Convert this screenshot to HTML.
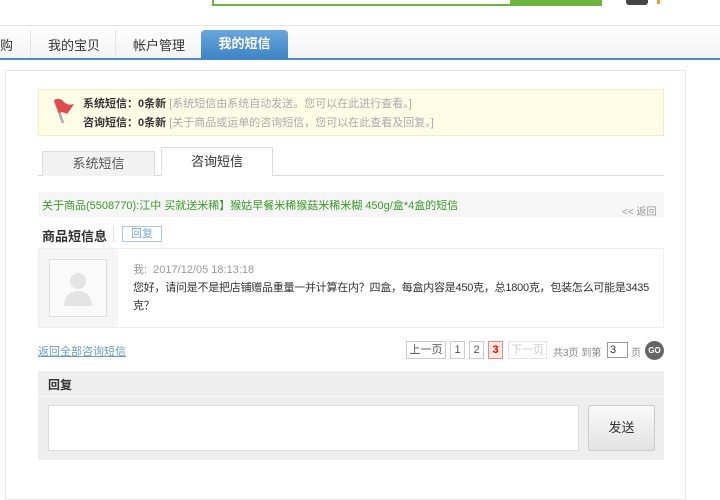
<!DOCTYPE html>
<html><head><meta charset="utf-8"><style>
*{margin:0;padding:0;box-sizing:border-box}
body{width:720px;height:474px;overflow:hidden;background:#fff;font-family:"Liberation Sans","Noto Sans CJK SC",sans-serif;font-size:12px;color:#333;position:relative}
.a{position:absolute}
</style></head><body>
<div class="a" style="left:212px;top:-4px;width:300px;height:10px;border:2px solid #6db33f;border-top:0"></div>
<div class="a" style="left:510px;top:0;width:92px;height:6px;background:#6db33f"></div>
<div class="a" style="left:626px;top:0;width:22px;height:5px;background:#444;border-radius:0 0 3px 3px"></div>
<div class="a" style="left:657px;top:0;width:3px;height:4px;background:#e8a030"></div>
<div class="a" style="left:0;top:25px;width:720px;height:1px;background:#e8e8e8"></div>
<div class="a" style="left:0;top:26px;width:720px;height:33px;background:linear-gradient(#fff,#f3f3f3)"></div>
<div class="a" style="left:0;top:58px;width:720px;height:2px;background:#4a8cc9"></div>
<div class="a" style="left:0;top:35px;font-size:13px">购</div>
<div class="a" style="left:30px;top:30px;width:1px;height:28px;background:#e4e4e4"></div>
<div class="a" style="left:48px;top:35px;font-size:13px">我的宝贝</div>
<div class="a" style="left:115px;top:30px;width:1px;height:28px;background:#e4e4e4"></div>
<div class="a" style="left:133px;top:35px;font-size:13px">帐户管理</div>
<div class="a" style="left:201px;top:30px;width:87px;height:29px;background:linear-gradient(#6aa6dc,#3d84c6);border-radius:4px 4px 0 0;color:#fff;font-weight:bold;font-size:13px;text-align:center;line-height:28px">我的短信</div>
<div class="a" style="left:5px;top:70px;width:681px;height:430px;border:1px solid #e6e6e6"></div>
<div class="a" style="left:38px;top:89px;width:626px;height:47px;background:#fffde6;border:1px solid #f3ecc4"></div>
<svg class="a" style="left:50px;top:97px" width="26" height="30"><path d="M5 4 L13 26" stroke="#aaa" stroke-width="2.5"/><path d="M4 3 Q10 0 14 5 Q18 9 24 7 Q21 12 17 17 Q12 14 9 16 Z" fill="#e04a4a"/></svg>
<div class="a" style="left:83px;top:95px;font-size:11px"><b>系统短信：0条新</b> <span style="color:#aaa">[系统短信由系统自动发送。您可以在此进行查看。]</span></div>
<div class="a" style="left:83px;top:114px;font-size:11px"><b>咨询短信：0条新</b> <span style="color:#aaa">[关于商品或运单的咨询短信，您可以在此查看及回复。]</span></div>
<div class="a" style="left:38px;top:175px;width:626px;height:1px;background:#ddd"></div>
<div class="a" style="left:42px;top:151px;width:113px;height:25px;background:#f2f2f2;border:1px solid #ddd;border-bottom:0;text-align:center;line-height:24px;font-size:13px;color:#555">系统短信</div>
<div class="a" style="left:161px;top:147px;width:112px;height:29px;background:#fff;border:1px solid #ddd;border-bottom:0;text-align:center;line-height:28px;font-size:13px">咨询短信</div>
<div class="a" style="left:38px;top:192px;width:626px;height:25px;background:#f6f6f6"></div>
<div class="a" style="left:42px;top:197px;font-size:11px;color:#3a9a2a">关于商品(5508770):江中 买就送米稀】猴姑早餐米稀猴菇米稀米糊 450g/盒*4盒的短信</div>
<div class="a" style="left:622px;top:203px;font-size:10px;color:#999">&lt;&lt; 返回</div>
<div class="a" style="left:42px;top:226px;font-size:13px;font-weight:bold">商品短信息</div>
<div class="a" style="left:113px;top:226px;width:1px;height:16px;background:#ddd"></div>
<div class="a" style="left:122px;top:226px;width:40px;height:16px;border:1px solid #a9c8e0;color:#7aaad0;font-size:11px;text-align:center;line-height:14px">回复</div>
<div class="a" style="left:38px;top:248px;width:626px;height:80px;border:1px solid #eee"></div>
<div class="a" style="left:39px;top:249px;width:79px;height:78px;background:#f5f5f5"></div>
<div class="a" style="left:49px;top:259px;width:58px;height:58px;border:1px solid #ddd;background:#fafafa"></div>
<svg class="a" style="left:62px;top:270px" width="32" height="38"><circle cx="16" cy="11" r="8" fill="#e4e4e4"/><path d="M2 36 Q3 21 16 21 Q29 21 30 36 Z" fill="#e4e4e4"/></svg>
<div class="a" style="left:133px;top:261px;font-size:11px;color:#999">我:&nbsp; 2017/12/05 18:13:18</div>
<div class="a" style="left:133px;top:279px;font-size:11px;line-height:18px;width:525px;letter-spacing:-0.25px">您好，请问是不是把店铺赠品重量一并计算在内？四盒，每盒内容是450克，总1800克，包装怎么可能是3435克？</div>
<div class="a" style="left:38px;top:343px;font-size:11px;color:#6a9ec0;text-decoration:underline">返回全部咨询短信</div>
<div class="a" style="left:406px;top:341px;width:40px;height:18px;border:1px solid #ccc;font-size:11px;text-align:center;line-height:16px;color:#555">上一页</div>
<div class="a" style="left:450px;top:341px;width:15px;height:18px;border:1px solid #ccc;font-size:11px;text-align:center;line-height:16px;color:#555">1</div>
<div class="a" style="left:469px;top:341px;width:15px;height:18px;border:1px solid #ccc;font-size:11px;text-align:center;line-height:16px;color:#555">2</div>
<div class="a" style="left:488px;top:341px;width:15px;height:18px;border:1px solid #e88;background:#fde9e0;font-size:11px;text-align:center;line-height:16px;color:#e00;font-weight:bold">3</div>
<div class="a" style="left:508px;top:341px;width:39px;height:18px;border:1px solid #e6e6e6;font-size:11px;text-align:center;line-height:16px;color:#ccc">下一页</div>
<div class="a" style="left:553px;top:344px;font-size:10px;color:#888">共3页 到第</div>
<div class="a" style="left:607px;top:342px;width:21px;height:16px;border:1px solid #999;font-size:11px;line-height:14px;padding-left:2px">3</div>
<div class="a" style="left:631px;top:344px;font-size:10px;color:#888">页</div>
<div class="a" style="left:645px;top:341px;width:19px;height:19px;border-radius:50%;background:#666;color:#fff;font-size:8px;font-weight:bold;text-align:center;line-height:19px">GO</div>
<div class="a" style="left:38px;top:371px;width:626px;height:89px;background:#eee"></div>
<div class="a" style="left:38px;top:396px;width:626px;height:1px;background:#f8f8f8"></div>
<div class="a" style="left:48px;top:376px;font-size:12px;font-weight:bold">回复</div>
<div class="a" style="left:48px;top:405px;width:531px;height:46px;background:#fff;border:1px solid #ddd"></div>
<div class="a" style="left:588px;top:405px;width:67px;height:46px;background:linear-gradient(#fafafa,#e2e2e2);border:1px solid #ccc;border-radius:2px;text-align:center;line-height:44px;font-size:13px">发送</div>
</body></html>
